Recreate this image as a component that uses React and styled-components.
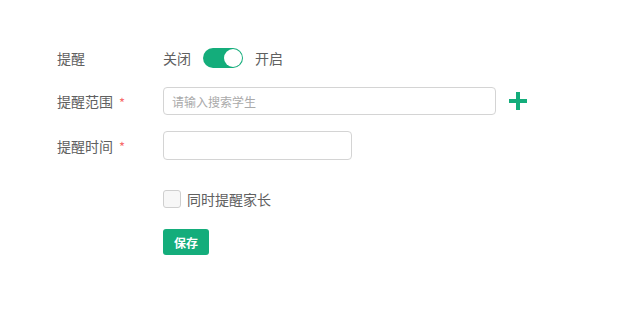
import React from 'react';
import styled, { createGlobalStyle } from 'styled-components';

const GREEN = '#14ad7b';

const GlobalStyle = createGlobalStyle`
  html, body {
    margin: 0;
    padding: 0;
    background: #fff;
  }
  body {
    font-family: "Noto Sans CJK SC", "Noto Sans", sans-serif;
    color: #666;
  }
`;

const Form = styled.div`
  display: flex;
  flex-direction: column;
  padding: 48px 0 0 57px;
`;

const Row = styled.div`
  display: flex;
  align-items: center;
  height: ${(p) => p.h || 20}px;
  margin-bottom: ${(p) => p.gap || 0}px;
`;

const Label = styled.div`
  width: 106px;
  flex-shrink: 0;
  display: flex;
  align-items: center;
  font-size: 14px;
  color: #606060;
  line-height: 20px;
`;

const Required = styled.span`
  color: #f76b6b;
  font-size: 13px;
  margin-left: 6px;
  line-height: 1;
  position: relative;
  top: 1px;
`;

const SwitchText = styled.span`
  font-size: 14px;
  color: #606060;
  line-height: 20px;
`;

const Switch = styled.div`
  position: relative;
  width: 40px;
  height: 20px;
  border-radius: 10px;
  background: ${(p) => (p.on ? GREEN : '#ccc')};
  margin: 0 12px;
  &::after {
    content: '';
    position: absolute;
    top: 1px;
    left: ${(p) => (p.on ? '21px' : '1px')};
    width: 18px;
    height: 18px;
    border-radius: 50%;
    background: #fff;
  }
`;

const Input = styled.input`
  box-sizing: border-box;
  width: ${(p) => p.w}px;
  height: ${(p) => p.h}px;
  border: 1px solid #d4d4d4;
  border-radius: 4px;
  padding: 0 8px;
  font-family: inherit;
  font-size: 12px;
  color: #333;
  outline: none;
  &::placeholder {
    color: #aaa;
  }
`;

const AddButton = styled.button`
  border: none;
  background: none;
  padding: 0;
  margin-left: 13px;
  display: flex;
  cursor: pointer;
`;

const Checkbox = styled.span`
  box-sizing: border-box;
  width: 18px;
  height: 18px;
  border: 1px solid #cfcfcf;
  border-radius: 3px;
  background: #f7f7f7;
  margin-right: 6px;
`;

const CheckText = styled.span`
  font-size: 14px;
  color: #606060;
  line-height: 20px;
`;

const SaveButton = styled.button`
  width: 46px;
  height: 26px;
  border: none;
  border-radius: 3px;
  background: ${GREEN};
  color: #fff;
  font-family: inherit;
  font-size: 12px;
  font-weight: bold;
  padding: 0;
  cursor: pointer;
`;

const Spacer = styled.div`
  width: 106px;
  flex-shrink: 0;
`;

const App = () => (
  <>
    <GlobalStyle />
    <Form>
      <Row gap={19}>
        <Label>提醒</Label>
        <SwitchText>关闭</SwitchText>
        <Switch on />
        <SwitchText>开启</SwitchText>
      </Row>
      <Row h={28} gap={16}>
        <Label>
          提醒范围<Required>*</Required>
        </Label>
        <Input w={333} h={28} placeholder="请输入搜索学生" />
        <AddButton>
          <svg width="18" height="18" viewBox="0 0 18 18">
            <rect x="7" y="0" width="4" height="18" fill={GREEN} />
            <rect x="0" y="7" width="18" height="4" fill={GREEN} />
          </svg>
        </AddButton>
      </Row>
      <Row h={29} gap={30}>
        <Label>
          提醒时间<Required>*</Required>
        </Label>
        <Input w={189} h={29} />
      </Row>
      <Row h={18} gap={21}>
        <Spacer />
        <Checkbox />
        <CheckText>同时提醒家长</CheckText>
      </Row>
      <Row h={26}>
        <Spacer />
        <SaveButton>保存</SaveButton>
      </Row>
    </Form>
  </>
);

export default App;
